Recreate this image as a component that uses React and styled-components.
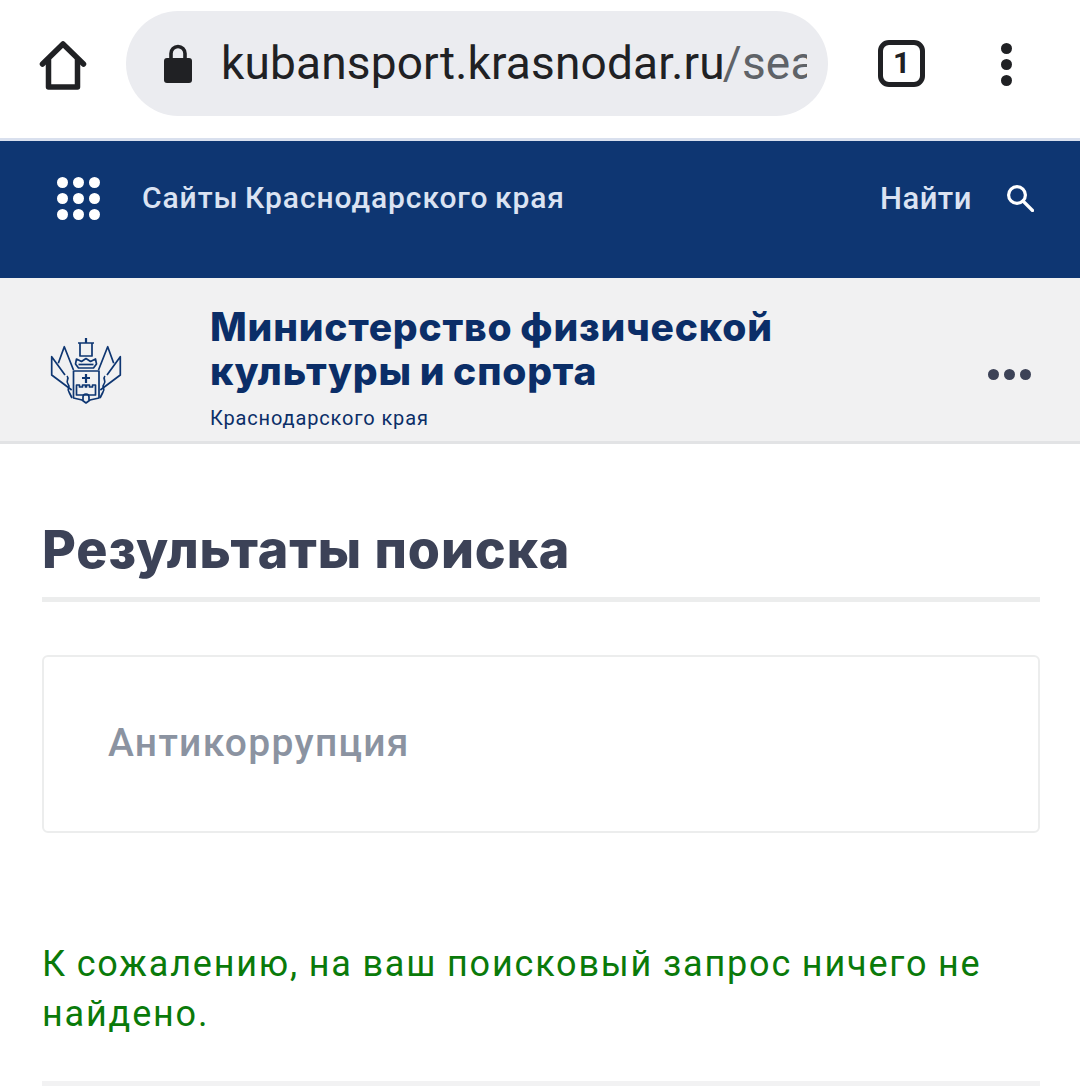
import React from 'react';
import styled, { createGlobalStyle } from 'styled-components';

const GlobalStyle = createGlobalStyle`
  html, body {
    margin: 0;
    padding: 0;
    background: #fff;
    overflow: hidden;
  }
  body {
    font-family: Roboto, "Liberation Sans", sans-serif;
  }
`;

const Page = styled.div`
  width: 1080px;
  height: 1086px;
  overflow: hidden;
`;

const BrowserBar = styled.div`
  height: 138px;
  box-sizing: content-box;
  border-bottom: 3px solid #d9e0ee;
  display: flex;
  align-items: flex-start;
  padding-left: 38px;
`;

const HomeButton = styled.svg`
  width: 50px;
  height: 50px;
  margin-top: 40px;
  flex: none;
`;

const Omnibox = styled.div`
  width: 702px;
  height: 105px;
  margin: 11px 0 0 38px;
  padding-left: 38px;
  box-sizing: border-box;
  flex: none;
  border-radius: 53px;
  background: #ebecf0;
  display: flex;
  align-items: center;
  gap: 29px;
`;

const Url = styled.div`
  width: 586px;
  font-size: 46px;
  line-height: 105px;
  color: #202124;
  white-space: nowrap;
  overflow: hidden;
  letter-spacing: 0.17px;

  span {
    color: #5f6368;
    margin-left: -2px;
  }
`;

const TabCount = styled.div`
  width: 47px;
  height: 47px;
  margin: 40px 0 0 50px;
  box-sizing: border-box;
  flex: none;
  border: 5px solid #202124;
  border-radius: 11px;
  color: #202124;
  font-size: 30px;
  font-weight: 700;
  line-height: 36px;
  text-align: center;
`;

const Kebab = styled.div`
  margin: 43px 0 0 76px;
  display: flex;
  flex-direction: column;
  gap: 5px;
`;

const KebabDot = styled.i`
  display: block;
  width: 11px;
  height: 11px;
  border-radius: 50%;
  background: #202124;
`;

const RegionBar = styled.header`
  height: 137px;
  background: #0e3672;
  display: flex;
  align-items: flex-start;
  padding: 36px 46px 0 57px;
  box-sizing: border-box;
`;

const DotGrid = styled.div`
  display: grid;
  grid-template-columns: repeat(3, 11px);
  gap: 5px;
  flex: none;
`;

const GridDot = styled.i`
  display: block;
  width: 11px;
  height: 11px;
  border-radius: 50%;
  background: #fff;
`;

const RegionTitle = styled.div`
  margin-left: 42px;
  flex: 1;
  font-size: 30px;
  line-height: 42px;
  font-weight: 500;
  letter-spacing: 0.93px;
  word-spacing: -2px;
  color: #dbe3f2;
`;

const SearchLabel = styled.div`
  margin: 1px -1px 0 0;
  font-size: 31px;
  line-height: 42px;
  font-weight: 500;
  letter-spacing: 0.5px;
  color: #dbe3f2;
`;

const SearchIcon = styled.svg`
  width: 28px;
  height: 28px;
  margin: 7px 0 0 35px;
  flex: none;
`;

const MinistryBar = styled.div`
  height: 166px;
  box-sizing: border-box;
  background: #f1f1f2;
  border-bottom: 3px solid #e2e3e5;
  display: flex;
  align-items: flex-start;
  padding: 27px 49px 0 50px;
`;

const Crest = styled.svg`
  width: 74px;
  height: 68px;
  margin-top: 33px;
  flex: none;
`;

const MinistryText = styled.div`
  margin-left: 86px;
  flex: 1;
  color: #0b2e68;
`;

const MinistryName = styled.div`
  font-family: Inter, "Liberation Sans", sans-serif;
  font-size: 39px;
  line-height: 44px;
  font-weight: 800;
  letter-spacing: 0.8px;
  word-spacing: -1.500px;
`;

const MinistryRegion = styled.div`
  margin-top: 13px;
  font-size: 20px;
  line-height: 24px;
  letter-spacing: 0.85px;
`;

const MoreDots = styled.div`
  display: flex;
  gap: 5px;
  margin-top: 64px;
`;

const MoreDot = styled.i`
  display: block;
  width: 11px;
  height: 11px;
  border-radius: 50%;
  background: #3c4257;
`;

const Content = styled.main`
  padding: 75px 40px 0 42px;
`;

const Heading = styled.h1`
  margin: 0;
  padding-bottom: 17px;
  border-bottom: 5px solid #eceded;
  font-family: Inter, "Liberation Sans", sans-serif;
  font-size: 52px;
  line-height: 61px;
  font-weight: 800;
  letter-spacing: 0.9px;
  color: #3c4257;
`;

const QueryBox = styled.div`
  margin-top: 53px;
  height: 178px;
  box-sizing: border-box;
  border: 2px solid #eceded;
  border-radius: 6px;
  padding: 0 0 2px 64px;
  display: flex;
  align-items: center;
  font-size: 39px;
  font-weight: 500;
  letter-spacing: 1.3px;
  color: #8b93a1;
`;

const Message = styled.p`
  margin: 106px 0 0;
  padding-bottom: 42px;
  border-bottom: 5px solid #f2f2f3;
  font-size: 36px;
  line-height: 50px;
  letter-spacing: 1.82px;
  word-spacing: -1px;
  color: #0a7a0a;
`;

const App = () => {
  return (
    <Page>
      <GlobalStyle />
      <BrowserBar>
        <HomeButton viewBox="0 0 50 50" fill="none" stroke="#202124" strokeWidth="5.5" strokeLinecap="round" strokeLinejoin="round">
          <path d="M4.5 24 25 4l20.5 20" />
          <path d="M10.5 20v27h29V20" />
        </HomeButton>
        <Omnibox>
          <svg width="28" height="39" viewBox="0 0 28 39" style={{ flex: 'none' }}>
            <path d="M7 16V9.5a7 7 0 0 1 14 0V16" fill="none" stroke="#202124" strokeWidth="3.6" />
            <rect x="0" y="14" width="28" height="25" rx="3" fill="#202124" />
          </svg>
          <Url>
            kubansport.krasnodar.ru<span>/search</span>
          </Url>
        </Omnibox>
        <TabCount>1</TabCount>
        <Kebab>
          <KebabDot />
          <KebabDot />
          <KebabDot />
        </Kebab>
      </BrowserBar>

      <RegionBar>
        <DotGrid>
          {Array.from({ length: 9 }, (_, i) => (
            <GridDot key={i} />
          ))}
        </DotGrid>
        <RegionTitle>Сайты Краснодарского края</RegionTitle>
        <SearchLabel>Найти</SearchLabel>
        <SearchIcon viewBox="0 0 28 28" fill="none" stroke="#fff" strokeWidth="3.2">
          <circle cx="11" cy="11" r="8.4" />
          <path d="m17 17 9.5 9.5" strokeLinecap="round" />
        </SearchIcon>
      </RegionBar>

      <MinistryBar>
        <Crest viewBox="0 0 74 68" fill="none" stroke="#0e3672" strokeWidth="1.7" strokeLinejoin="round">
          {/* banner and crown */}
          <path d="M36 0v5" strokeWidth="2.2" />
          <path d="M28 5h16M30 5v13h12V5" />
          <path d="M26.500 21l5 2.500 4.500-3 4.500 3 5-2.500 1 5-3 4H28.500l-3-4z" />
          <path d="M28.500 26.500h15" />
          {/* shield */}
          <path d="M23.500 33H49v27l-9 2-4 3-4-3-8.500-2z" />
          <path d="M36 36v9M32 40h8" strokeWidth="2.2" />
          <path d="M26.500 57v-10h3v2h3v-2h3v2h1v-2h3v2h3v-2h3v10z" />
          <path d="M33 62v-3a3 3 0 0 1 6 0v3" />
          {/* inner flags */}
          <path d="M8.300 25.300 14.300 8.700 23.500 32" />
          <path d="M63.700 25.300 57.700 8.700 48.500 32" />
          {/* outer flags */}
          <path d="M15 37 1.700 18.700V37L21.700 52" />
          <path d="M57 37 70.300 18.700V37L50.300 52" />
          {/* wreath */}
          <path d="M17 38c3 3-2 5 1 8s-2 5 1 8l3 6M55 38c-3 3 2 5-1 8s2 5-1 8l-3 6" />
        </Crest>
        <MinistryText>
          <MinistryName>
            Министерство физической
            <br />
            культуры и спорта
          </MinistryName>
          <MinistryRegion>Краснодарского края</MinistryRegion>
        </MinistryText>
        <MoreDots>
          <MoreDot />
          <MoreDot />
          <MoreDot />
        </MoreDots>
      </MinistryBar>

      <Content>
        <Heading>Результаты поиска</Heading>
        <QueryBox>Антикоррупция</QueryBox>
        <Message>К сожалению, на ваш поисковый запрос ничего не найдено.</Message>
      </Content>
    </Page>
  );
};

export default App;
